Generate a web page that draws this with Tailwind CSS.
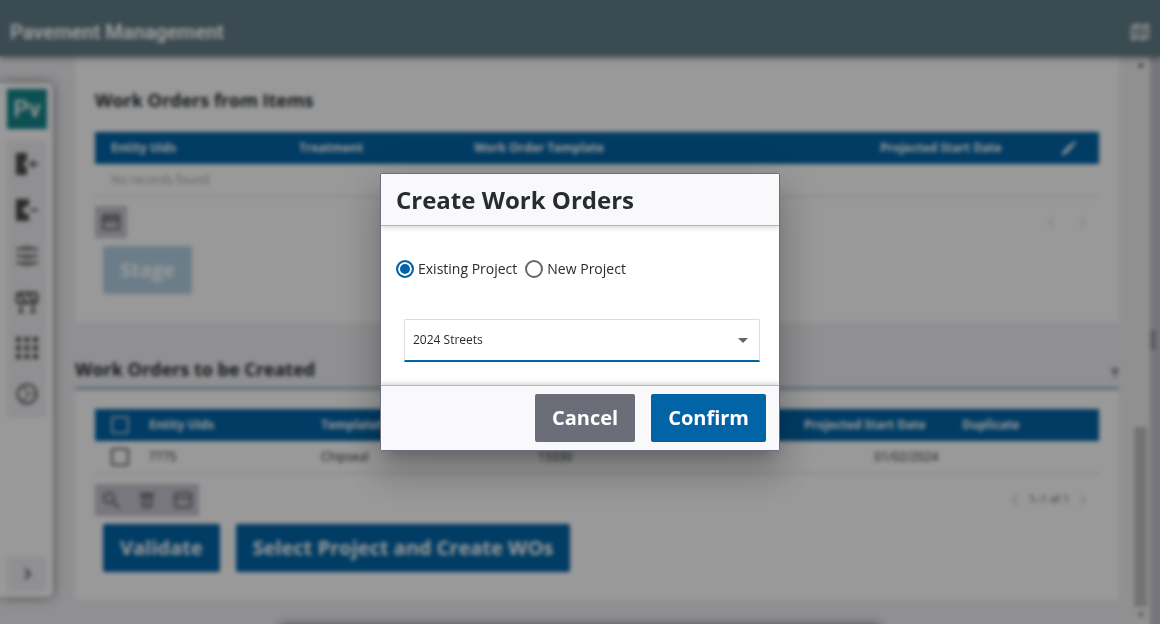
<!DOCTYPE html>
<html lang="en">
<head>
<meta charset="utf-8">
<meta name="viewport" content="width=device-width, initial-scale=1">
<title>Pavement Management</title>
<script src="https://cdn.jsdelivr.net/npm/@tailwindcss/browser@4"></script>
</head>
<body class="h-screen overflow-hidden bg-[#f0f0f4] font-['Open_Sans',sans-serif] text-[#262c30]">
<div class="flex h-full flex-col">
  <header class="relative z-10 flex h-14 shrink-0 items-center justify-between bg-[#627d89] pt-2 pr-[11px] pl-[10px] text-white shadow-[0_2px_6px_rgba(0,0,0,0.45)]">
    <h1 class="font-['Roboto',sans-serif] text-xl font-bold">Pavement Management</h1>
    <button type="button" aria-label="Map">
      <svg class="block size-[18px]" viewBox="0 0 18 18" fill="none" stroke="currentColor" stroke-width="2"><path d="M1 3.5 6 1.5l6 2 5-2v13l-5 2-6-2-5 2zM6 1.5v13M12 3.5v13"/></svg>
    </button>
  </header>

  <div class="flex min-h-0 flex-1">
    <aside class="mt-[27px] mb-[27px] flex w-[53px] shrink-0 flex-col justify-between rounded-r-md bg-white px-[7px] pt-[6px] pb-[6px] shadow-[0_0_12px_rgba(0,0,0,0.5)]">
      <div>
        <div class="flex size-10 items-center justify-center bg-[#14868c] font-['Roboto',sans-serif] text-2xl font-medium text-white">Pv</div>
        <nav class="mt-3 flex flex-col bg-[#f0f0f4] text-[#4a4a4a]">
          <button type="button" aria-label="Check out" class="flex h-[46px] items-center justify-center"><svg class="size-6" viewBox="0 0 24 24" fill="currentColor"><path d="M1 1h11v7l-4 4 4 4v7H1zM17 8h2v3h4v2h-4v3h-2v-3h-4v-2h4z"/></svg></button>
          <button type="button" aria-label="Check in" class="flex h-[46px] items-center justify-center"><svg class="size-6" viewBox="0 0 24 24" fill="currentColor"><path d="M1 1h13v7h-2V7l-5 5 5 5v-1h2v7H1zM15 11h8v2h-8z"/></svg></button>
          <button type="button" aria-label="List" class="flex h-[46px] items-center justify-center"><svg class="size-6" viewBox="0 0 24 24" stroke="currentColor" stroke-width="2"><path d="M1 5h22M1 12h22M1 19h22"/><path d="M7 3h10M7 14h10M7 21h10" stroke-width="1"/></svg></button>
          <button type="button" aria-label="Road work" class="flex h-[46px] items-center justify-center"><svg class="size-6" viewBox="0 0 24 24" fill="none" stroke="currentColor" stroke-width="2.4"><rect x="2" y="3" width="20" height="10" rx="2"/><path d="M5 4l6 8M13 4l6 8"/><path d="M6 15v6M18 15v6M3 22h6M15 22h6" stroke-width="2"/></svg></button>
          <button type="button" aria-label="Apps" class="flex h-[46px] items-center justify-center"><svg class="size-6" viewBox="0 0 24 24" fill="currentColor"><path d="M1 1h5v5H1zM9.500 1h5v5h-5zM18 1h5v5h-5zM1 9.500h5v5H1zM9.500 9.500h5v5h-5zM18 9.500h5v5h-5zM1 18h5v5H1zM9.500 18h5v5h-5zM18 18h5v5h-5z"/></svg></button>
          <button type="button" aria-label="Dashboard" class="flex h-[46px] items-center justify-center"><svg class="size-6" viewBox="0 0 24 24" fill="none" stroke="currentColor" stroke-width="2"><circle cx="12" cy="12" r="9.500"/><path d="M8 5l6 7-6 7M14 12h7" stroke-width="1.200"/></svg></button>
        </nav>
      </div>
      <button type="button" aria-label="Expand" class="flex h-[34px] items-center justify-center bg-[#f0f0f4] text-[#4a4a4a]"><svg class="size-4" viewBox="0 0 16 16" fill="none" stroke="currentColor" stroke-width="2"><path d="M6 3l5 5-5 5"/></svg></button>
    </aside>

    <main class="ml-[22px] min-w-0 flex-1">
      <section class="h-[266px] bg-white px-5 pt-8">
        <h2 class="text-lg leading-6 font-bold">Work Orders from Items</h2>
        <table class="mt-5 w-full table-fixed text-left text-xs">
          <colgroup><col class="w-[188px]"><col class="w-[175px]"><col><col class="w-[186px]"><col class="w-[49px]"></colgroup>
          <thead>
            <tr class="h-8 bg-[#0064a7] text-white">
              <th class="pl-4 font-bold">Entity Uids</th>
              <th class="pl-4 font-bold">Treatment</th>
              <th class="pl-4 font-bold">Work Order Template</th>
              <th class="pl-4 font-bold">Projected Start Date</th>
              <th><button type="button" aria-label="Edit columns" class="block pl-[11px]"><svg class="block size-4" viewBox="0 0 16 16" fill="currentColor"><path d="M1 15l.5-3L10.500 3l2.500 2.500L4 14.500zM11.500 2L13 .5l2.500 2.500L14 4.500z"/></svg></button></th>
            </tr>
          </thead>
          <tbody>
            <tr class="h-8 border-b border-[#d4d4d4]"><td colspan="5" class="pl-4 text-[#a8a8a8]">No records found</td></tr>
          </tbody>
        </table>
        <div class="mt-[9px] flex items-center justify-between">
          <button type="button" aria-label="Columns" class="flex size-8 items-center justify-center bg-[#c6c6d0] text-[#66666c]"><svg class="size-[18px]" viewBox="0 0 18 18" fill="none" stroke="currentColor" stroke-width="2"><rect x="1" y="2" width="16" height="14" rx="1"/><path d="M1 5h16M1 8h16"/></svg></button>
          <div class="flex gap-4 pr-2 text-[#dedede]">
            <button type="button" aria-label="Previous page"><svg class="size-4" viewBox="0 0 16 16" fill="none" stroke="currentColor" stroke-width="2"><path d="M10 3L6 8l4 5"/></svg></button>
            <button type="button" aria-label="Next page"><svg class="size-4" viewBox="0 0 16 16" fill="none" stroke="currentColor" stroke-width="2"><path d="M6 3l4 5-4 5"/></svg></button>
          </div>
        </div>
        <button type="button" disabled class="mt-2 ml-2 h-12 rounded-xs bg-[#b2d1e5] px-[17px] text-xl font-bold text-white">Stage</button>
      </section>

      <div class="mt-[35px] flex h-[33px] items-start justify-between border-b-3 border-[#9fb3bc]">
        <h2 class="text-lg leading-6 font-bold">Work Orders to be Created</h2>
        <button type="button" aria-label="Collapse section" class="mt-[11px] text-[#777]"><svg class="block h-[10px] w-2" viewBox="0 0 8 10" fill="none" stroke="currentColor" stroke-width="1.500"><path d="M0 1h8M1 5l3-3 3 3M4 2v8"/></svg></button>
      </div>

      <section class="h-[210px] bg-white px-5 pt-[19px]">
        <table class="w-full table-fixed text-left text-xs">
          <colgroup><col class="w-[38px]"><col class="w-[172px]"><col class="w-[219px]"><col><col class="w-[158px]"><col class="w-[153px]"></colgroup>
          <thead>
            <tr class="h-8 bg-[#0064a7] text-white">
              <th class="pl-4"><input type="checkbox" aria-label="Select all rows" class="block size-[18px] appearance-none rounded-xs border-2 border-[#a9c6da]"></th>
              <th class="pl-4 font-bold">Entity Uids</th>
              <th class="pl-4 font-bold">TemplateName</th>
              <th></th>
              <th class="pl-4 font-bold">Projected Start Date</th>
              <th class="pl-4 font-bold">Duplicate</th>
            </tr>
          </thead>
          <tbody>
            <tr class="h-8 border-b border-[#d4d4d4]">
              <td class="pl-4"><input type="checkbox" aria-label="Select work order 7775" class="block size-[18px] appearance-none rounded-xs border-2 border-[#666]"></td>
              <td class="pl-4">7775</td>
              <td class="pl-4">Chipseal</td>
              <td class="pl-[14px]">13330</td>
              <td class="pr-2 text-right">01/02/2024</td>
              <td></td>
            </tr>
          </tbody>
        </table>
        <div class="mt-[10px] flex items-center justify-between">
          <div class="flex bg-[#c6c6d0] text-[#66666c]">
            <button type="button" aria-label="Search" class="flex h-8 w-8 items-center justify-center"><svg class="size-[18px]" viewBox="0 0 18 18" fill="none" stroke="currentColor" stroke-width="2.200"><circle cx="7" cy="7" r="5"/><path d="M11 11l6 6"/></svg></button>
            <button type="button" aria-label="Delete" class="flex h-8 w-10 items-center justify-center"><svg class="size-[18px]" viewBox="0 0 18 18" fill="none" stroke="currentColor" stroke-width="2"><path d="M2 3h14M3 5h12M4 4l1 12h8l1-12M9 7v6"/></svg></button>
            <button type="button" aria-label="Columns" class="flex h-8 w-8 items-center justify-center"><svg class="size-[18px]" viewBox="0 0 18 18" fill="none" stroke="currentColor" stroke-width="2"><rect x="1" y="2" width="16" height="14" rx="1"/><path d="M1 7h16"/></svg></button>
          </div>
          <div class="flex items-center pr-2 text-[#d4d4d4]">
            <button type="button" aria-label="Previous page"><svg class="size-4" viewBox="0 0 16 16" fill="none" stroke="currentColor" stroke-width="2"><path d="M10 3L6 8l4 5"/></svg></button>
            <span class="w-[52px] text-center text-[11px] text-[#555]">1–1 of 1</span>
            <button type="button" aria-label="Next page"><svg class="size-4" viewBox="0 0 16 16" fill="none" stroke="currentColor" stroke-width="2"><path d="M6 3l4 5-4 5"/></svg></button>
          </div>
        </div>
        <div class="mt-2 ml-2 flex gap-4 text-xl font-bold text-white">
          <button type="button" class="h-12 rounded-xs bg-[#0064a7] px-[17px]">Validate</button>
          <button type="button" class="h-12 rounded-xs bg-[#0064a7] px-[17px]">Select Project and Create WOs</button>
        </div>
      </section>
    </main>

    <!-- scroll track -->
    <div class="ml-3 flex w-[19px] flex-col items-center justify-between bg-[#f1f1f1] py-[5px]">
      <svg class="h-2 w-[6px]" viewBox="0 0 6 8" fill="#333"><path d="M0 6l3-4 3 4z"/></svg>
      <div class="mt-auto mb-1 h-[180px] w-[13px] bg-[#c1c1c1]"></div>
      <svg class="h-2 w-[6px]" viewBox="0 0 6 8" fill="#666"><path d="M0 2l3 4 3-4z"/></svg>
    </div>
    <!-- panel splitter -->
    <div class="flex w-[10px] items-center bg-[#c4c5d0]"><div class="h-5 w-[6px] bg-[#9899a8]"></div></div>
  </div>
</div>
<div class="absolute inset-x-[280px] top-full h-4 shadow-[0_0_8px_rgba(0,0,0,0.5)]"></div>

<div class="fixed inset-0 z-20 flex items-center justify-center bg-black/40 backdrop-blur-[2px]">
  <div role="dialog" aria-modal="true" aria-labelledby="dlg-title" class="w-[400px] overflow-hidden rounded-xs border border-[#6b6e7c] bg-white shadow-[0_11px_15px_-7px_rgba(0,0,0,0.2),0_24px_38px_3px_rgba(0,0,0,0.14),0_9px_46px_8px_rgba(0,0,0,0.12)]">
    <div class="border-b border-[#b4b5c4] bg-[#f9f9fc] px-[15px] pt-[10px] pb-[9px] shadow-[0_2px_5px_rgba(0,0,0,0.15)]">
      <h2 id="dlg-title" class="text-2xl font-bold">Create Work Orders</h2>
    </div>
    <div class="px-[15px] pt-[33px] pb-[23px]">
      <div class="flex gap-2 text-sm">
        <label class="flex items-center gap-1"><input type="radio" name="project" checked class="size-[18px] appearance-none rounded-full border-2 border-[#666] checked:border-[#0064a7] checked:bg-[#0064a7] checked:shadow-[inset_0_0_0_2px_white]">Existing Project</label>
        <label class="flex items-center gap-1"><input type="radio" name="project" class="size-[18px] appearance-none rounded-full border-2 border-[#666] checked:border-[#0064a7] checked:bg-[#0064a7] checked:shadow-[inset_0_0_0_2px_white]">New Project</label>
      </div>
      <div class="relative mt-10 mr-1 ml-2">
        <select aria-label="Project" class="block h-[43px] w-full appearance-none rounded-t-xs border border-b-2 border-[#dcdcdc] border-b-[#0064a7] bg-white px-2 text-xs">
          <option>2024 Streets</option>
        </select>
        <svg class="pointer-events-none absolute top-[19px] right-3 h-[5px] w-[10px]" viewBox="0 0 10 5" fill="#666"><path d="M0 0h10L5 5z"/></svg>
      </div>
    </div>
    <div class="flex justify-end gap-4 border-t border-[#b4b5c4] bg-[#f9f9fc] py-2 pr-[13px] text-xl font-bold text-white shadow-[0_-2px_5px_rgba(0,0,0,0.15)]">
      <button type="button" class="h-12 rounded-xs bg-[#6b6e79] px-[17px]">Cancel</button>
      <button type="button" class="h-12 rounded-xs bg-[#0064a7] px-[17px]">Confirm</button>
    </div>
  </div>
</div>
</body>
</html>
